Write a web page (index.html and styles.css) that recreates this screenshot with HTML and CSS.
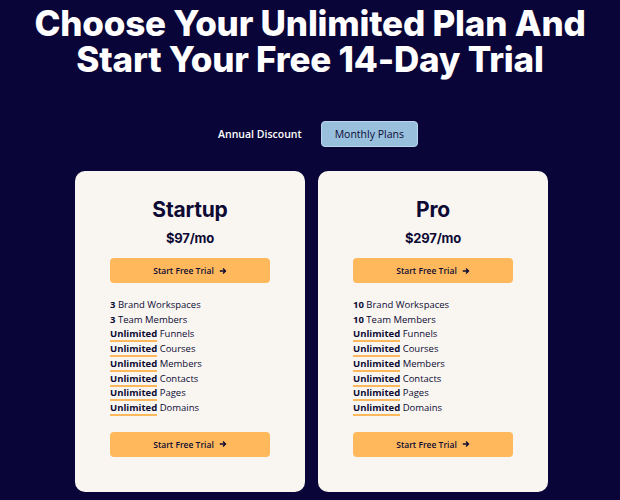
FILE: index.html
```html
<!DOCTYPE html>
<html lang="en">
<head>
    <meta charset="UTF-8">
    <meta name="viewport" content="width=device-width, initial-scale=1.0">
    <title>Pricing</title>
    <link rel="stylesheet" href="styles.css">
</head>
<body>
<div class="page">
    <h1 class="headline">Choose Your Unlimited Plan And<br>Start Your Free 14-Day Trial</h1>

    <div class="toggle">
        <span class="toggle-option">Annual Discount</span>
        <span class="toggle-option active">Monthly Plans</span>
    </div>

    <div class="plans">
        <div class="plan">
            <h2 class="plan-name">Startup</h2>
            <div class="plan-price">$97/mo</div>
            <a class="trial-btn" href="#">Start Free Trial
                <svg class="arrow" viewBox="0 0 10 10" width="8" height="8"><path d="M1 5h7M5 1.8L8.2 5 5 8.2" fill="none" stroke="currentColor" stroke-width="1.6"/></svg>
            </a>
            <ul class="features">
                <li><b>3</b> Brand Workspaces</li>
                <li><b>3</b> Team Members</li>
                <li><b class="hl">Unlimited</b> Funnels</li>
                <li><b class="hl">Unlimited</b> Courses</li>
                <li><b class="hl">Unlimited</b> Members</li>
                <li><b class="hl">Unlimited</b> Contacts</li>
                <li><b class="hl">Unlimited</b> Pages</li>
                <li><b class="hl">Unlimited</b> Domains</li>
            </ul>
            <a class="trial-btn" href="#">Start Free Trial
                <svg class="arrow" viewBox="0 0 10 10" width="8" height="8"><path d="M1 5h7M5 1.8L8.2 5 5 8.2" fill="none" stroke="currentColor" stroke-width="1.6"/></svg>
            </a>
        </div>
        <div class="plan">
            <h2 class="plan-name">Pro</h2>
            <div class="plan-price">$297/mo</div>
            <a class="trial-btn" href="#">Start Free Trial
                <svg class="arrow" viewBox="0 0 10 10" width="8" height="8"><path d="M1 5h7M5 1.8L8.2 5 5 8.2" fill="none" stroke="currentColor" stroke-width="1.6"/></svg>
            </a>
            <ul class="features">
                <li><b>10</b> Brand Workspaces</li>
                <li><b>10</b> Team Members</li>
                <li><b class="hl">Unlimited</b> Funnels</li>
                <li><b class="hl">Unlimited</b> Courses</li>
                <li><b class="hl">Unlimited</b> Members</li>
                <li><b class="hl">Unlimited</b> Contacts</li>
                <li><b class="hl">Unlimited</b> Pages</li>
                <li><b class="hl">Unlimited</b> Domains</li>
            </ul>
            <a class="trial-btn" href="#">Start Free Trial
                <svg class="arrow" viewBox="0 0 10 10" width="8" height="8"><path d="M1 5h7M5 1.8L8.2 5 5 8.2" fill="none" stroke="currentColor" stroke-width="1.6"/></svg>
            </a>
        </div>
    </div>
</div>
</body>
</html>
```

FILE: styles.css
```css
*{
    margin: 0;
    padding: 0;
    box-sizing: border-box;
}
html,body{
    width: 100%;
    height: 100%;
}
body{
    background: #0a0538;
    font-family: "Open Sans", "Noto Sans", sans-serif;
    color: #0d0a33;
    overflow: hidden;
}
.page{
    display: flex;
    flex-direction: column;
    align-items: center;
    padding-top: 5px;
}
.headline{
    font-family: Inter, "Liberation Sans", sans-serif;
    font-weight: 800;
    font-size: 35px;
    line-height: 36px;
    letter-spacing: -0.2px;
    color: #fff;
    text-align: center;
}
.toggle{
    display: flex;
    align-items: center;
    gap: 19px;
    margin-top: 44px;
    margin-left: 16px;
}
.toggle-option{
    font-size: 10.5px;
    font-weight: 600;
    color: #fff;
}
.toggle-option.active{
    background: #98c0dd;
    color: #0d0a33;
    font-weight: 500;
    padding: 5px 13px 5px 13px;
    border-radius: 4px;
    border: 1px solid #b9d6ea;
}
.plans{
    display: flex;
    gap: 13px;
    margin-top: 24px;
    margin-left: 3px;
}
.plan{
    width: 230px;
    height: 321px;
    background: #f9f6f2;
    border-radius: 10px;
    display: flex;
    flex-direction: column;
    align-items: center;
    padding-top: 25px;
}
.plan-name{
    font-family: Inter, "Liberation Sans", sans-serif;
    font-size: 21px;
    font-weight: 700;
    line-height: 28px;
    letter-spacing: -0.2px;
}
.plan-price{
    font-family: Inter, "Liberation Sans", sans-serif;
    font-size: 13px;
    font-weight: 700;
    margin-top: 6px;
    letter-spacing: -0.2px;
}
.trial-btn{
    display: flex;
    align-items: center;
    justify-content: center;
    gap: 5px;
    width: 160px;
    height: 25px;
    margin-top: 12px;
    background: #ffb95c;
    border-radius: 4px;
    color: #0d0a33;
    font-size: 8.5px;
    font-weight: 600;
    text-decoration: none;
}
.features{
    list-style: none;
    width: 160px;
    margin-top: 15px;
    margin-bottom: 4px;
}
.features li{
    font-size: 9.5px;
    line-height: 14.7px;
    font-weight: 500;
}
.features b{
    font-weight: 700;
}
.features .hl{
    border-bottom: 2px solid #ffb95c;
}
```
